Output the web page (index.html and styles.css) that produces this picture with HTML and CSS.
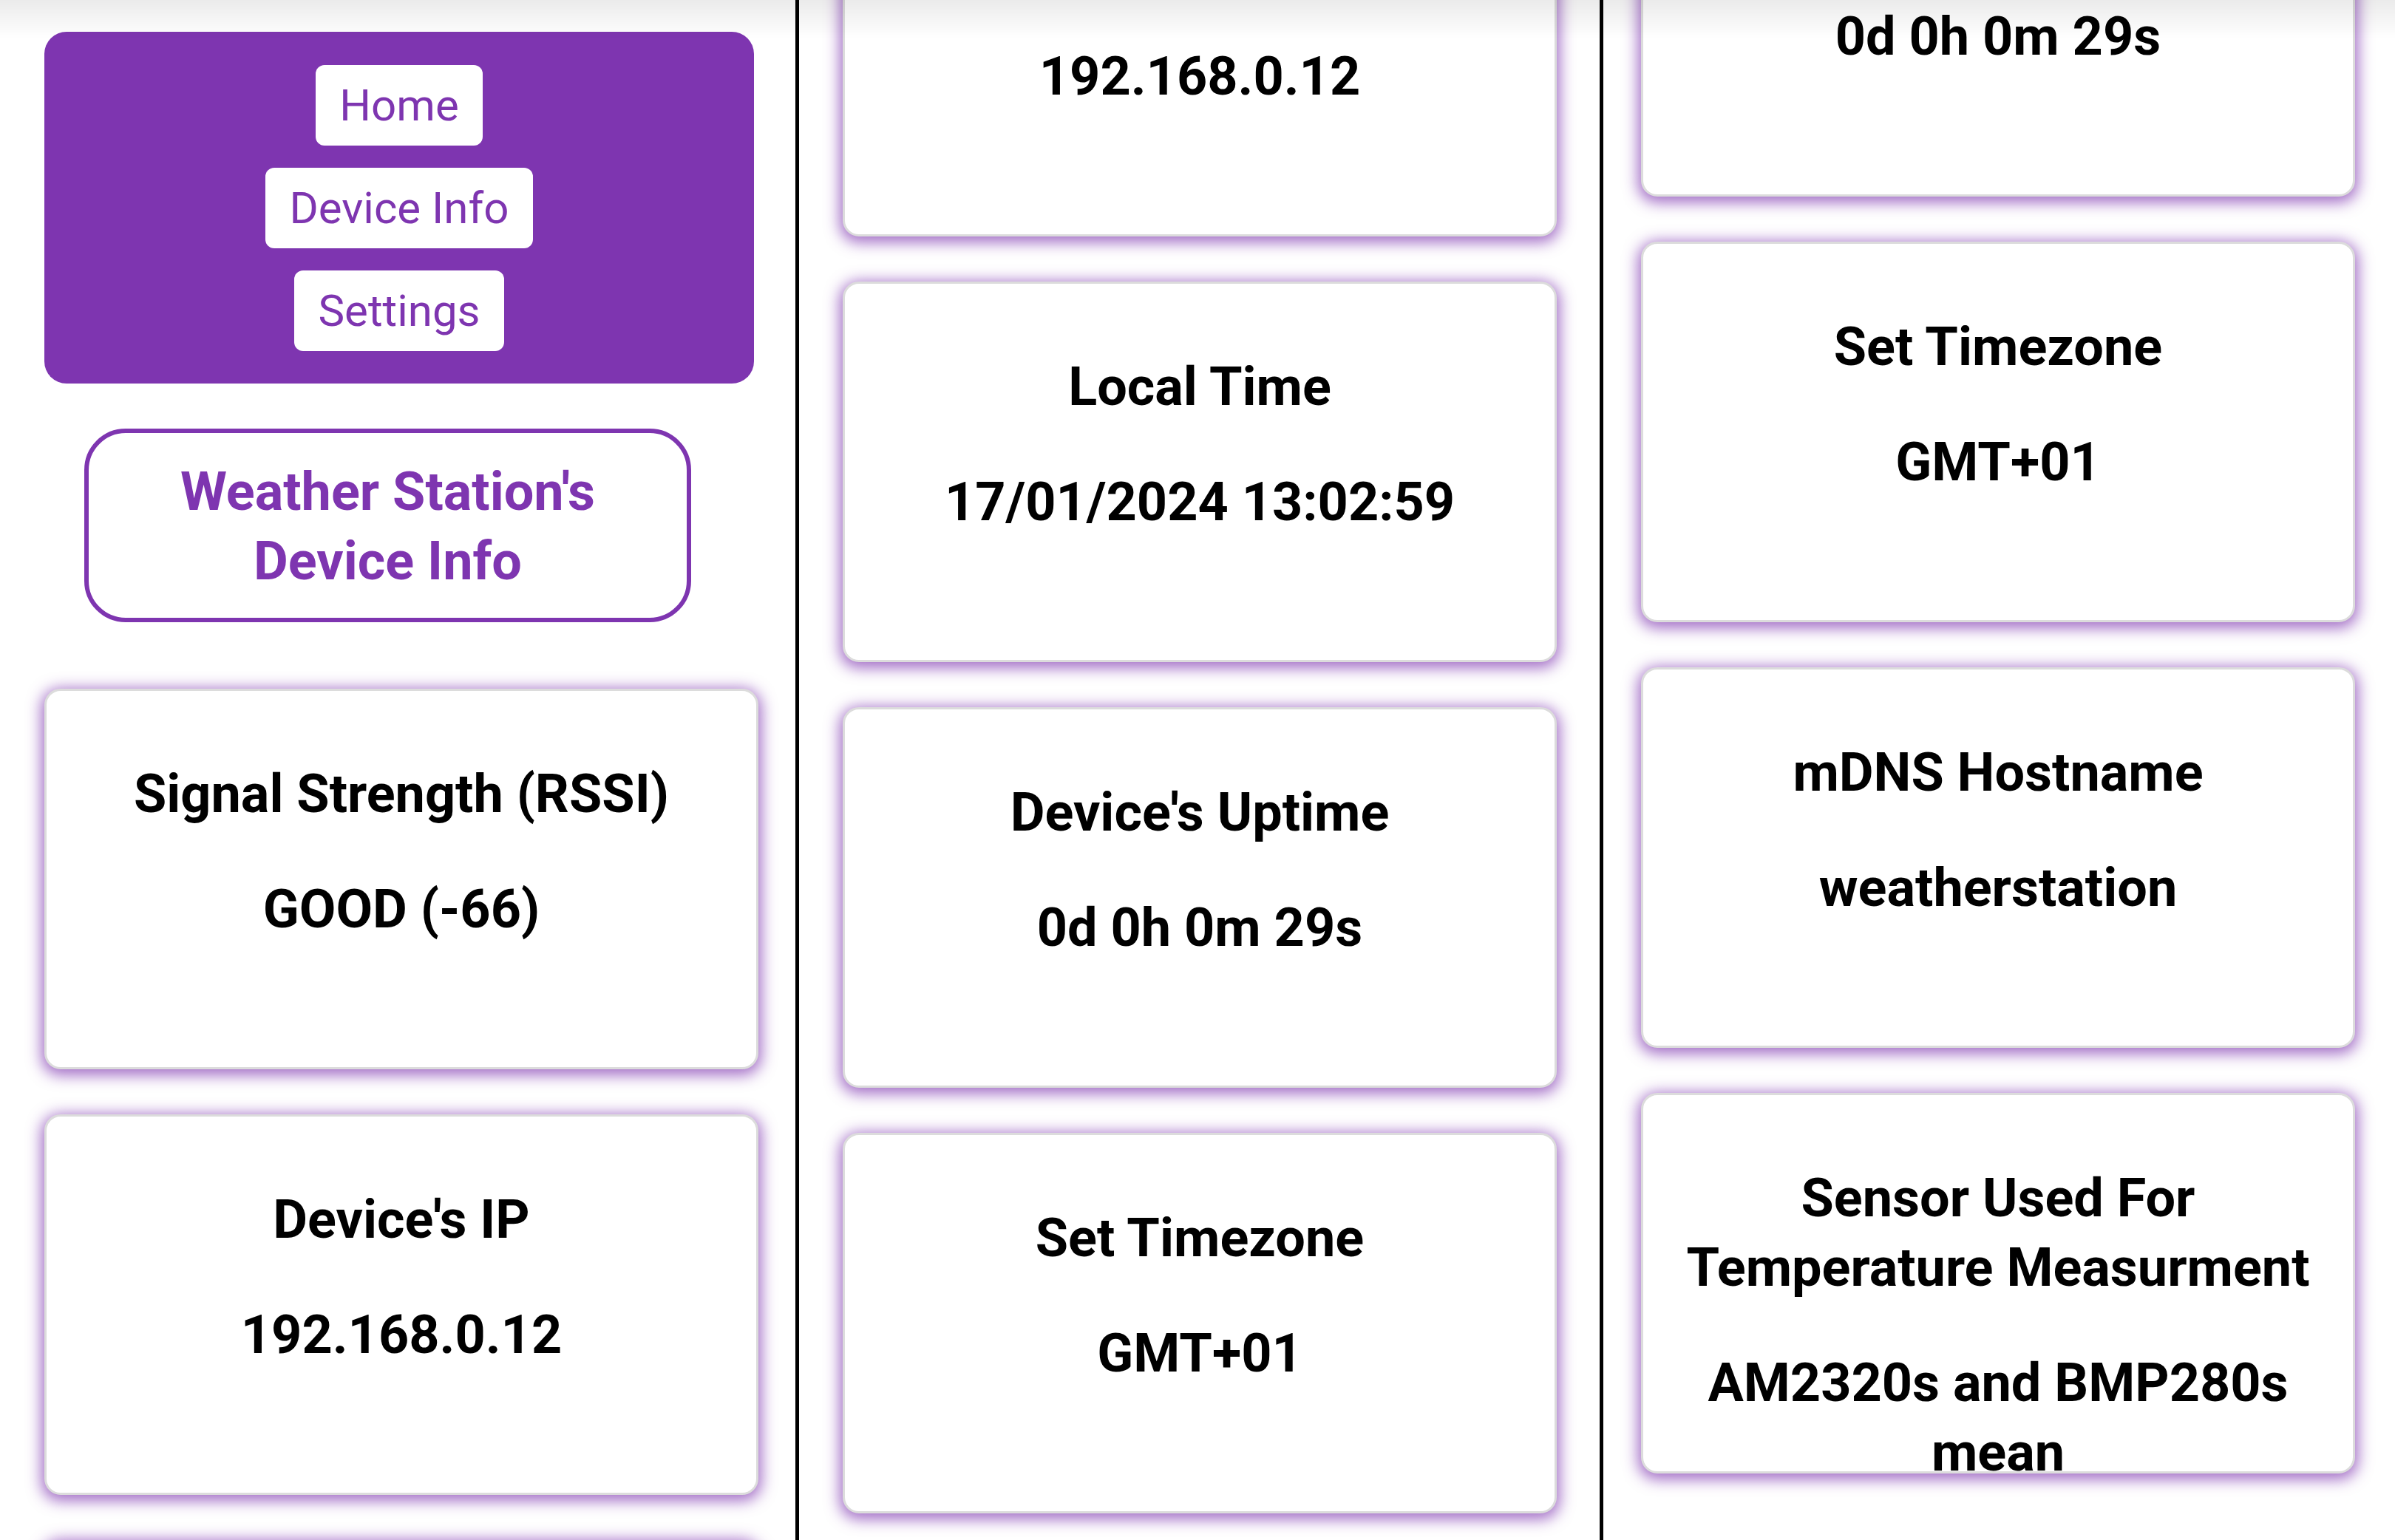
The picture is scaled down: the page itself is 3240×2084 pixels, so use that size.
FILE: index.html
```html
<!DOCTYPE html>
<html lang="en">
<head>
<meta charset="utf-8">
<title>Weather Station's Device Info</title>
<link rel="stylesheet" href="styles.css">
</head>
<body>
<div class="page">
  <div class="col col-1">
    <nav class="nav">
      <a class="nav-btn" href="#">Home</a>
      <a class="nav-btn" href="#">Device Info</a>
      <a class="nav-btn" href="#">Settings</a>
    </nav>
    <h1 class="title">Weather Station's<br>Device Info</h1>
    <div class="card">
      <p class="card-label">Signal Strength (RSSI)</p>
      <p class="card-value">GOOD (-66)</p>
    </div>
    <div class="card">
      <p class="card-label">Device's IP</p>
      <p class="card-value">192.168.0.12</p>
    </div>
    <div class="card"></div>
  </div>
  <div class="rule"></div>
  <div class="col col-2">
    <div class="card card-frag card-frag-2">
      <p class="card-value">192.168.0.12</p>
    </div>
    <div class="card">
      <p class="card-label">Local Time</p>
      <p class="card-value">17/01/2024 13:02:59</p>
    </div>
    <div class="card">
      <p class="card-label">Device's Uptime</p>
      <p class="card-value">0d 0h 0m 29s</p>
    </div>
    <div class="card">
      <p class="card-label">Set Timezone</p>
      <p class="card-value">GMT+01</p>
    </div>
  </div>
  <div class="rule"></div>
  <div class="col col-3">
    <div class="card card-frag card-frag-3">
      <p class="card-value">0d 0h 0m 29s</p>
    </div>
    <div class="card">
      <p class="card-label">Set Timezone</p>
      <p class="card-value">GMT+01</p>
    </div>
    <div class="card">
      <p class="card-label">mDNS Hostname</p>
      <p class="card-value">weatherstation</p>
    </div>
    <div class="card">
      <p class="card-label">Sensor Used For Temperature Measurment</p>
      <p class="card-value">AM2320s and BMP280s mean</p>
    </div>
  </div>
</div>
<div class="top-shade"></div>
</body>
</html>
```

FILE: styles.css
```css
* {
  box-sizing: border-box;
}

html,
body {
  margin: 0;
  padding: 0;
}

body {
  width: 3240px;
  height: 2084px;
  overflow: hidden;
  background: #ffffff;
  font-family: Roboto, "Liberation Sans", Arial, sans-serif;
  color: #000000;
}

.page {
  display: grid;
  grid-template-columns: 1076px 5px 1083px 5px 1071px;
  height: 2084px;
  overflow: hidden;
}

.rule {
  background: #000000;
}

.col {
  display: flex;
  flex-direction: column;
  align-items: flex-start;
  gap: 61px;
  min-width: 0;
}

.col-1 {
  padding: 43px 0 0 60px;
}

.col-2 {
  padding-left: 59px;
}

.col-3 {
  padding-left: 51px;
}

/* navigation */
.nav {
  width: 960px;
  background: #7e35b0;
  border-radius: 30px;
  padding: 45px 0 44px;
  display: flex;
  flex-direction: column;
  align-items: center;
  gap: 30px;
}

.nav-btn {
  display: block;
  background: #ffffff;
  color: #7e35b0;
  font-size: 60px;
  font-weight: 400;
  line-height: 70px;
  padding: 19.5px 32px;
  border-radius: 12px;
  text-decoration: none;
}

/* page title */
.title {
  margin: 0 0 29px 54px;
  width: 821px;
  border: 6px solid #7e35b0;
  border-radius: 56px;
  padding: 33px 0 29px;
  text-align: center;
  color: #7e35b0;
  font-size: 72px;
  font-weight: 700;
  line-height: 94px;
}

/* info cards */
.card {
  flex: none;
  width: 966px;
  height: 515px;
  background: #ffffff;
  border: 3px solid #dcdcdc;
  border-radius: 22px;
  padding: 93px 18px 0;
  text-align: center;
  box-shadow: 0 4px 20px 4px rgba(126, 53, 176, 0.72);
}

.card-label,
.card-value {
  margin: 0;
  font-size: 72px;
  font-weight: 700;
  line-height: 94px;
}

.card-value {
  margin-top: 62px;
}

.card-frag {
  padding-top: 187px;
}

.card-frag-2 {
  margin-top: -195px;
}

.card-frag-3 {
  margin-top: -249px;
}

.top-shade {
  position: fixed;
  top: 0;
  left: 0;
  right: 0;
  height: 52px;
  background: linear-gradient(to bottom, rgba(0, 0, 0, 0.08), rgba(0, 0, 0, 0));
  pointer-events: none;
}
```
